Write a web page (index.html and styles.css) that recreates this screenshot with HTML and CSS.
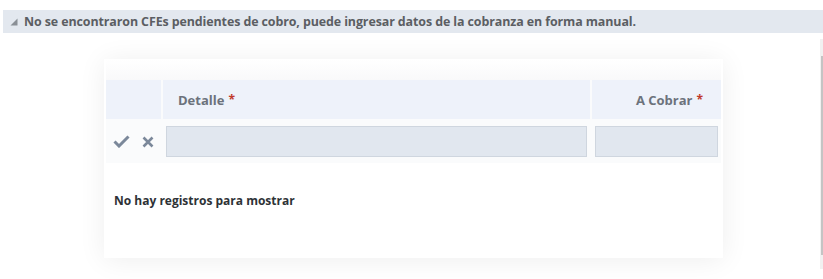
FILE: index.html
```html
<!DOCTYPE html>
<html lang="es">
<head>
<meta charset="utf-8">
<link rel="stylesheet" href="styles.css">
</head>
<body>
<div class="bar">
  <svg class="tri" width="8" height="8" viewBox="0 0 8 8"><polygon points="7.5,0.5 7.5,7.5 0.5,7.5" fill="#8a8f96"/></svg>
  <span class="bar-text">No se encontraron CFEs pendientes de cobro, puede ingresar datos de la cobranza en forma manual.</span>
</div>
<div class="body-row">
  <div class="main">
    <div class="card">
      <div class="card-top"></div>
      <div class="grid">
        <div class="th th-act"></div>
        <div class="th th-det">Detalle<span class="req">*</span></div>
        <div class="th th-amt">A Cobrar<span class="req">*</span></div>
        <div class="td td-act">
          <svg width="17" height="13" viewBox="0 0 17 13"><path d="M1.5 6.5 L6 11 L15.5 1.5" fill="none" stroke="#7b889a" stroke-width="3"/></svg>
          <svg width="12" height="12" viewBox="0 0 12 12"><path d="M1.5 1.5 L10.5 10.5 M10.5 1.5 L1.5 10.5" fill="none" stroke="#7b889a" stroke-width="2.6"/></svg>
        </div>
        <div class="td td-det"><div class="input"></div></div>
        <div class="td td-amt"><div class="input"></div></div>
      </div>
      <div class="empty">No hay registros para mostrar</div>
    </div>
  </div>
  <div class="scroll"><div class="thumb"></div></div>
</div>
</body>
</html>
```
FILE: styles.css
```css
html, body {
  margin: 0;
  padding: 0;
  background: #fff;
  font-family: "Open Sans", "Noto Sans", sans-serif;
}
.bar {
  margin: 10px 0 0 3px;
  height: 23px;
  background: #e3e8ef;
  display: flex;
  align-items: center;
  padding-left: 7px;
  gap: 6px;
}
.tri { display: block; margin-top: 1px; }
.bar-text {
  font-size: 12.45px;
  font-weight: 700;
  color: #5b5e63;
  letter-spacing: -0.1px;
}
.body-row {
  display: flex;
}
.main {
  flex: 1;
  padding: 26px 0 21px 104px;
}
.scroll {
  width: 3px;
  margin-top: 6px;
  height: 230px;
  background: #f1f1f1;
  display: flex;
  justify-content: flex-end;
  padding-top: 17px;
  box-sizing: border-box;
}
.thumb {
  width: 2px;
  height: 199px;
  background: #c4c4c4;
}
.card {
  width: 619px;
  height: 199px;
  background: #fff;
  box-shadow: 0 2px 26px rgba(0,0,0,0.07);
  box-sizing: border-box;
  padding: 0 2px;
}
.card-top {
  height: 21px;
  background: linear-gradient(#fff, #f9f9fa);
}
.grid {
  display: grid;
  grid-template-columns: 55px 427px 1fr;
  column-gap: 2px;
  background: #fafbfc;
}
.th {
  height: 39px;
  background: #eef2fa;
  display: flex;
  align-items: center;
  font-size: 13px;
  font-weight: 700;
  color: #6c727c;
}
.th-det { padding-left: 15px; }
.th-amt { justify-content: flex-end; padding-right: 18px; }
.req { color: #c0392b; margin-left: 4px; font-size: 12px; }
.td {
  height: 43px;
  display: flex;
  align-items: center;
}
.td-act {
  gap: 12px;
  padding-left: 7px;
  padding-top: 1px;
}
.td-act svg { display: block; }
.td-det { padding: 0 3px 0 3px; }
.td-amt { padding: 0 3px 0 3px; }
.input {
  flex: 1;
  height: 31px;
  margin-top: 1px;
  background: #e1e7ef;
  border: 1px solid #cfd6df;
  box-sizing: border-box;
}
.empty {
  padding: 29px 0 0 8px;
  font-size: 12px;
  font-weight: 700;
  color: #2e3236;
}
```
